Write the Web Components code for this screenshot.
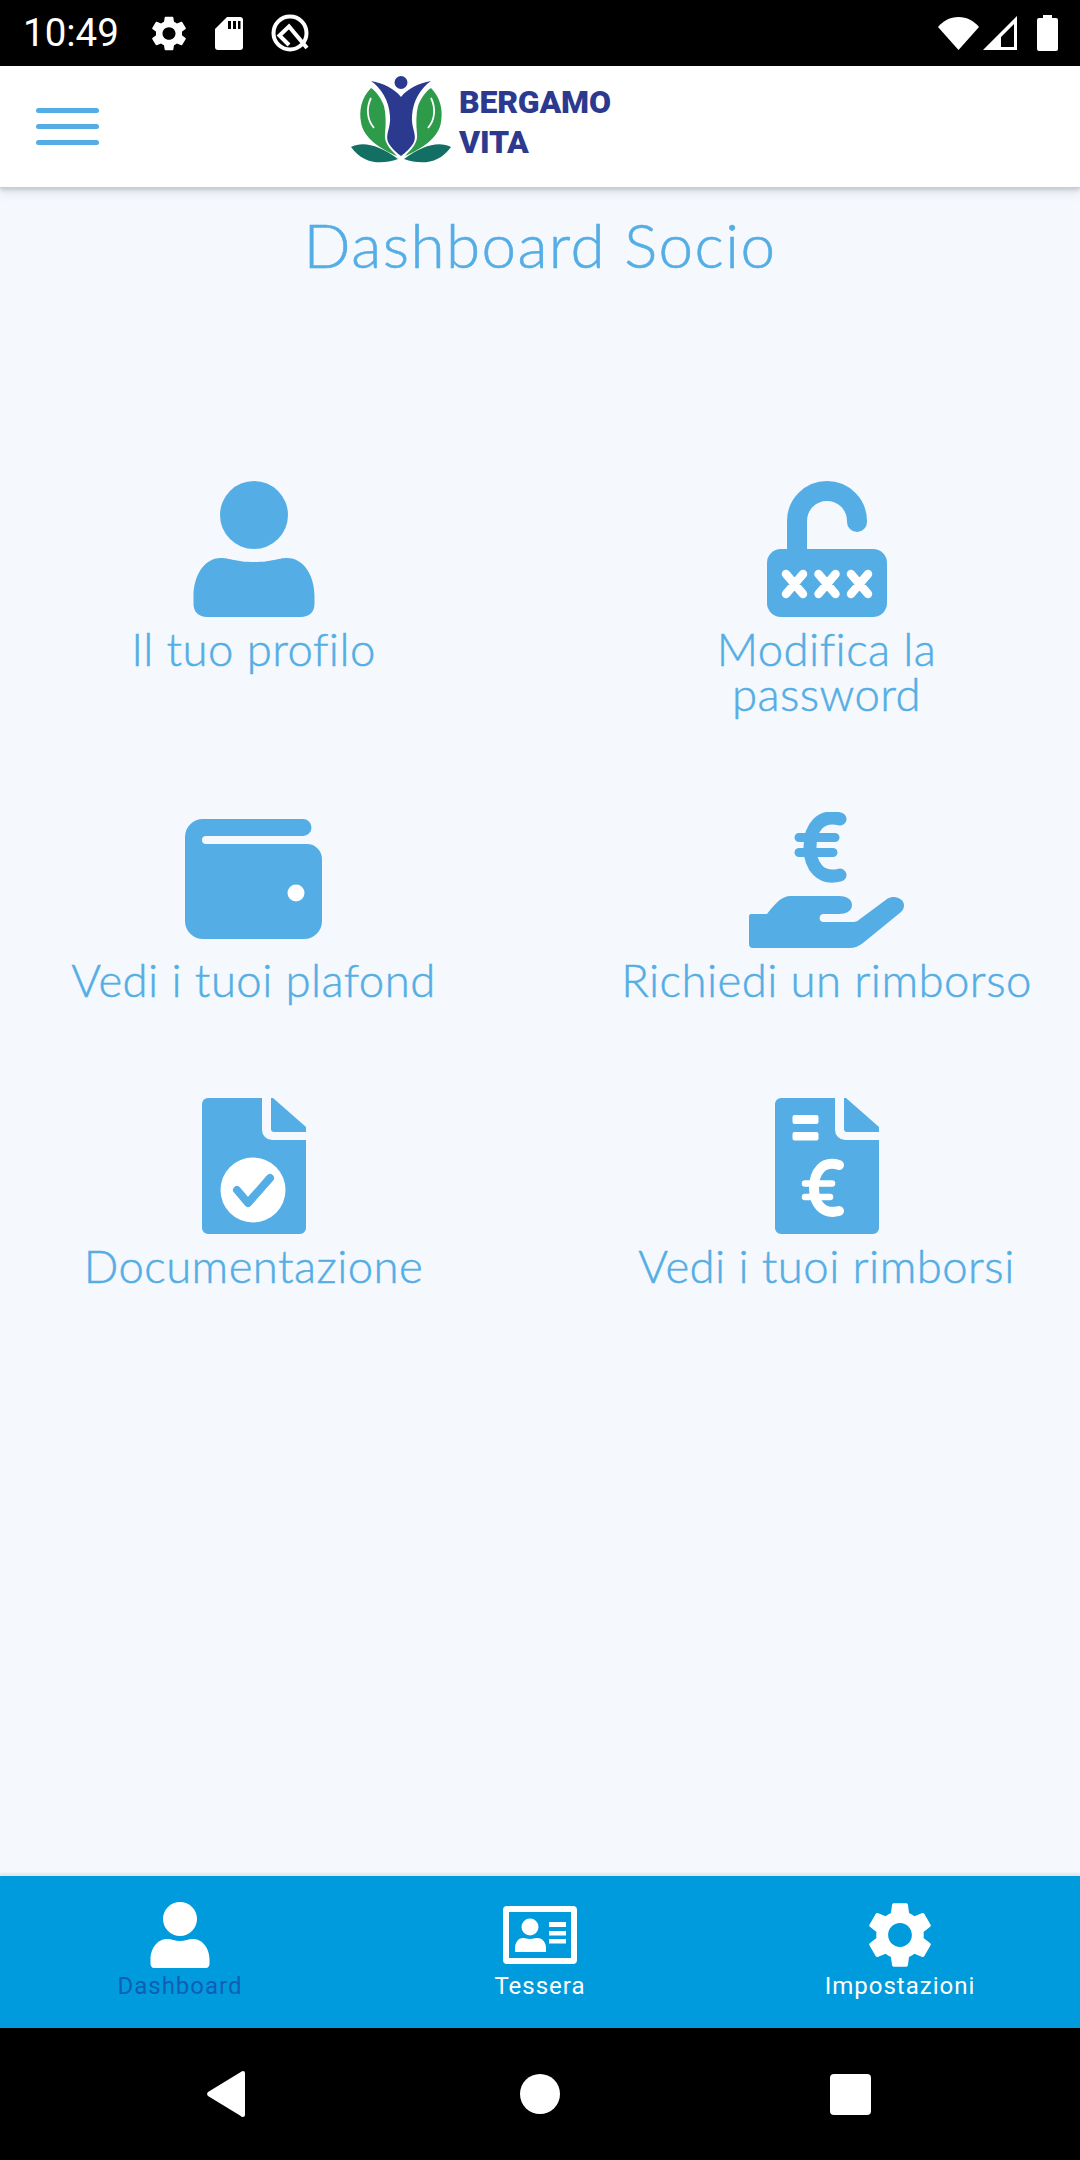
<!DOCTYPE html>
<html lang="it">
<head>
<meta charset="utf-8">
<title>Dashboard Socio</title>
<style>
  html, body { margin: 0; padding: 0; background: #f5f8fc; }
</style>
</head>
<body>
<member-dashboard>
  <status-bar slot="status"></status-bar>
  <app-header slot="header"></app-header>

  <dash-tile label="Il tuo profilo">
    <svg width="140" height="136" viewBox="0 0 140 136" fill="#54aee5">
      <ellipse cx="70" cy="34" rx="34" ry="34"/>
      <path d="M37 77C46 77 52 81 70 81C88 81 94 77 103 77C120 77 130.500 95 130.500 115V123C130.500 131 125 136 117 136H23C15 136 9.500 131 9.500 123V115C9.500 95 20 77 37 77Z"/>
    </svg>
  </dash-tile>
  <dash-tile label="Modifica la<br>password">
    <svg width="120" height="136" viewBox="0 0 120 136" fill="#54aee5">
      <path d="M30 75V40A30 30 0 0 1 90 40V41" fill="none" stroke="#54aee5" stroke-width="20" stroke-linecap="round"/>
      <rect x="0" y="68" width="120" height="68" rx="14"/>
      <path d="M19 93L36 113M36 93L19 113M51.500 93L68.500 113M68.500 93L51.500 113M84 93L101 113M101 93L84 113" stroke="#fff" stroke-width="8.500" stroke-linecap="round"/>
    </svg>
  </dash-tile>
  <dash-tile label="Vedi i tuoi plafond">
    <svg width="137" height="136" viewBox="0 -7 137 136" fill="#54aee5">
      <path d="M18 0H118A8.500 8.500 0 0 1 118 17H21A4 4 0 0 0 21 25H122A15 15 0 0 1 137 40V102A18 18 0 0 1 119 120H18A18 18 0 0 1 0 102V18A18 18 0 0 1 18 0Z"/>
      <ellipse cx="111" cy="74" rx="8.500" ry="8.500" fill="#fff"/>
    </svg>
  </dash-tile>
  <dash-tile label="Richiedi un rimborso">
    <svg width="155" height="136" viewBox="0 0 155 136" fill="#54aee5">
      <path d="M91 7C72 2 61 15 61 35C61 55 72 68 91 63" fill="none" stroke="#54aee5" stroke-width="13" stroke-linecap="round"/>
      <path d="M50 25.500H86M50 40.500H84" stroke="#54aee5" stroke-width="9" stroke-linecap="round"/>
      <path d="M2 102H18C26 92 32 84 42 84H90C97 84 103 87 103 93C103 99 97 102 90 102H74C70 102 69 110 74 110H104C107 110 109 109 111 107L138 87C146 82 155 87 155 93C155 96 154 98 152 100L114 131C110 134 106 136 100 136H4C1 136 0 134 0 132V104C0 103 1 102 2 102Z"/>
    </svg>
  </dash-tile>
  <dash-tile label="Documentazione">
    <svg width="104" height="136" viewBox="0 0 104 136" fill="#54aee5">
      <path d="M6 0H60V32A10 10 0 0 0 70 42H104V130A6 6 0 0 1 98 136H6A6 6 0 0 1 0 130V6A6 6 0 0 1 6 0Z"/>
      <path d="M69 0H71L104 29V34H72A3 3 0 0 1 69 31Z"/>
      <circle cx="51" cy="92" r="32.500" fill="#fff"/>
      <path d="M35 92L46 105L68 80" fill="none" stroke="#54aee5" stroke-width="8" stroke-linecap="round" stroke-linejoin="round"/>
    </svg>
  </dash-tile>
  <dash-tile label="Vedi i tuoi rimborsi">
    <svg width="104" height="136" viewBox="0 0 104 136" fill="#54aee5">
      <path d="M6 0H60V32A10 10 0 0 0 70 42H104V130A6 6 0 0 1 98 136H6A6 6 0 0 1 0 130V6A6 6 0 0 1 6 0Z"/>
      <path d="M69 0H71L104 29V34H72A3 3 0 0 1 69 31Z"/>
      <rect x="17.500" y="17" width="26" height="9" rx="2" fill="#fff"/>
      <rect x="17.500" y="34" width="26" height="8.500" rx="2" fill="#fff"/>
      <path d="M64 67C48 62 39 74 39 90C39 106 48 117 64 113" fill="none" stroke="#fff" stroke-width="10" stroke-linecap="round"/>
      <path d="M30 85.500H57M30 99H55" stroke="#fff" stroke-width="6.500" stroke-linecap="round"/>
    </svg>
  </dash-tile>

  <bottom-nav slot="nav">
    <nav-item label="Dashboard" active>
      <svg width="60" height="66" viewBox="0 0 60 66" fill="#fff">
        <ellipse cx="30" cy="17" rx="17" ry="17"/>
        <path d="M17 37C22 37 25 39 30 39C35 39 38 37 43 37C53 37 59.500 47 59.500 57V62C59.500 64 58 66 56 66H4C2 66 .5 64 .5 62V57C.5 47 7 37 17 37Z"/>
      </svg>
    </nav-item>
    <nav-item label="Tessera">
      <svg width="74" height="66" viewBox="0 -4 74 66" fill="#fff">
        <path fill-rule="evenodd" d="M4 0H70A4 4 0 0 1 74 4V54A4 4 0 0 1 70 58H4A4 4 0 0 1 0 54V4A4 4 0 0 1 4 0ZM6 6V52H68V6Z"/>
        <ellipse cx="27" cy="21" rx="8.500" ry="8.500"/>
        <path d="M20 32C23 32 24 33 27 33C30 33 31 32 34 32C40 32 43 37 43 42V46H12V42C12 37 15 32 20 32Z"/>
        <rect x="46" y="16" width="17" height="5"/>
        <rect x="46" y="25" width="17" height="4.500"/>
        <rect x="46" y="33" width="17" height="4.500"/>
      </svg>
    </nav-item>
    <nav-item label="Impostazioni">
      <svg width="62" height="66" viewBox="2.600 2 18.800 20" preserveAspectRatio="none" fill="#fff">
        <path d="M19.140 12.940c.04-.3.06-.61.06-.94 0-.32-.02-.64-.07-.94l2.030-1.580c.18-.14.23-.41.12-.61l-1.920-3.320c-.12-.22-.37-.29-.59-.22l-2.390.96c-.5-.38-1.030-.7-1.620-.94l-.36-2.540c-.04-.24-.24-.41-.48-.41h-3.840c-.24 0-.43.17-.47.41l-.36 2.540c-.59.24-1.130.57-1.620.94l-2.390-.96c-.22-.08-.47 0-.59.22L2.740 8.870c-.12.21-.08.47.12.61l2.030 1.580c-.05.3-.09.63-.09.94s.02.64.07.94l-2.030 1.580c-.18.14-.23.41-.12.61l1.920 3.320c.12.22.37.29.59.22l2.390-.96c.5.38 1.030.7 1.620.94l.36 2.540c.05.24.24.41.48.41h3.840c.24 0 .44-.17.47-.41l.36-2.540c.59-.24 1.130-.56 1.620-.94l2.390.96c.22.08.47 0 .59-.22l1.920-3.320c.12-.22.07-.47-.12-.61l-2.010-1.580zM12 15.600c-1.980 0-3.600-1.620-3.600-3.600s1.620-3.600 3.600-3.600 3.600 1.620 3.600 3.600-1.620 3.600-3.600 3.600z"/>
      </svg>
    </nav-item>
  </bottom-nav>
  <system-nav slot="system"></system-nav>
</member-dashboard>

<script>
class MemberDashboard extends HTMLElement {
  constructor() {
    super();
    this.attachShadow({ mode: 'open' });
    this.shadowRoot.innerHTML = `
      <style>
        :host { display: flex; flex-direction: column; width: 1080px; height: 2160px; background: #f5f8fc; overflow: hidden; }
        main { flex: 1; display: flex; flex-direction: column; align-items: center; }
        h1 {
          margin: 21px 0 0;
          font: 300 62px/72px Lato, "Liberation Sans", sans-serif;
          letter-spacing: 1.4px;
          -webkit-text-stroke: .6px #54aee5;
          color: #54aee5;
        }
        .grid {
          margin-top: 201px;
          display: grid;
          grid-template-columns: 507px 507px;
          column-gap: 66px;
          row-gap: 96px;
        }
      </style>
      <slot name="status"></slot>
      <slot name="header"></slot>
      <main>
        <h1>Dashboard Socio</h1>
        <div class="grid"><slot></slot></div>
      </main>
      <slot name="nav"></slot>
      <slot name="system"></slot>
    `;
  }
}
customElements.define('member-dashboard', MemberDashboard);

class StatusBar extends HTMLElement {
  constructor() {
    super();
    this.attachShadow({ mode: 'open' });
    this.shadowRoot.innerHTML = `
      <style>
        :host { display: flex; align-items: center; height: 66px; background: #000; color: #fff; padding: 0 22px 0 23px; box-sizing: border-box; }
        .time { font: 400 38.500px/66px Roboto, sans-serif; width: 129px; }
        svg { display: block; flex: none; }
        .left { display: flex; align-items: center; flex: 1; }
        .right { display: flex; align-items: center; }
      </style>
      <div class="left">
        <span class="time">10:49</span>
        <svg width="34" height="35" viewBox="2.600 2 18.800 20" preserveAspectRatio="none" fill="#fff"><path fill-rule="evenodd" d="M19.140 12.940c.04-.3.06-.61.06-.94 0-.32-.02-.64-.07-.94l2.030-1.580c.18-.14.23-.41.12-.61l-1.920-3.320c-.12-.22-.37-.29-.59-.22l-2.390.96c-.5-.38-1.030-.7-1.620-.94l-.36-2.540c-.04-.24-.24-.41-.48-.41h-3.840c-.24 0-.43.17-.47.41l-.36 2.540c-.59.24-1.130.57-1.620.94l-2.390-.96c-.22-.08-.47 0-.59.22L2.740 8.870c-.12.21-.08.47.12.61l2.030 1.580c-.05.3-.09.63-.09.94s.02.64.07.94l-2.030 1.580c-.18.14-.23.41-.12.61l1.920 3.320c.12.22.37.29.59.22l2.390-.96c.5.38 1.030.7 1.620.94l.36 2.540c.05.24.24.41.48.41h3.840c.24 0 .44-.17.47-.41l.36-2.540c.59-.24 1.130-.56 1.620-.94l2.390.96c.22.08.47 0 .59-.22l1.920-3.320c.12-.22.07-.47-.12-.61l-2.010-1.580zM12 15.600c-1.980 0-3.600-1.620-3.600-3.600s1.620-3.600 3.600-3.600 3.600 1.620 3.600 3.600-1.620 3.600-3.600 3.600z"/></svg>
        <svg style="margin-left:29px" width="28" height="33" viewBox="0 0 28 33"><path fill="#fff" d="M12 0H25A3 3 0 0 1 28 3V30A3 3 0 0 1 25 33H3A3 3 0 0 1 0 30V12Z"/><path fill="#000" d="M13 4h3v8h-3zM18 4h3v8h-3zM23 4h2.500v8H23z"/></svg>
        <svg style="margin-left:28px" width="38" height="38" viewBox="0 0 38 38" fill="none" stroke="#fff" stroke-width="4"><circle cx="19" cy="19" r="16.500"/><path d="M18 31L8.500 21.500L18 12.500L36 34"/></svg>
      </div>
      <div class="right">
        <svg width="41" height="33" viewBox="0 0 41 33"><path fill="#fff" d="M20.500 33L0 10C5 4 12 0 20.500 0S36 4 41 10Z"/></svg>
        <svg style="margin-left:4px" width="34" height="34" viewBox="0 0 34 34"><path fill="#fff" fill-rule="evenodd" d="M34 0V34H0ZM31 8L18 21V31H31Z"/></svg>
        <svg style="margin-left:20px" width="21" height="36" viewBox="0 0 21 36"><path fill="#fff" d="M6 0H15V3H19A2 2 0 0 1 21 5V34A2 2 0 0 1 19 36H2A2 2 0 0 1 0 34V5A2 2 0 0 1 2 3H6Z"/></svg>
      </div>
    `;
  }
}
customElements.define('status-bar', StatusBar);

class AppHeader extends HTMLElement {
  constructor() {
    super();
    this.attachShadow({ mode: 'open' });
    this.shadowRoot.innerHTML = `
      <style>
        :host { display: flex; align-items: center; height: 121px; background: #fff; position: relative; padding-left: 36px; box-sizing: border-box; z-index: 1; box-shadow: 0 1px 0 #c9ced3, 0 3px 4px rgba(120,130,140,.35), 0 8px 8px rgba(150,160,170,.12); }
        .burger { display: flex; flex-direction: column; gap: 11px; width: 63px; }
        .burger i { display: block; height: 5px; background: #54aee5; border-radius: 3px; }
        .brand { display: flex; align-items: flex-start; align-self: flex-start; margin: 10px 0 0 252px; }
        svg { display: block; }
        .name { margin: 6px 0 0 8px; font: 900 32px/40px Roboto, sans-serif; letter-spacing: -.2px; color: #2b3a8f; }
      </style>
      <div class="burger"><i></i><i></i><i></i></div>
      <div class="brand">
        <svg width="100" height="88" viewBox="0 0 100 88">
          <path fill="#2e9b4a" d="M20 12C10 22 8 35 10 46C12 62 30 73 46 80C38 72 33 66 34 58C35 48 35 38 33 30C30 22 25 15 20 12Z"/>
          <path fill="#2e9b4a" d="M80 12C90 22 92 35 90 46C88 62 70 73 54 80C62 72 67 66 66 58C65 48 65 38 67 30C70 22 75 15 80 12Z"/>
          <path fill="none" stroke="#fff" stroke-width="1.800" d="M20 22C15 32 16 44 23 52M80 22C85 32 84 44 77 52"/>
          <path fill="#2b3a8f" stroke="#fff" stroke-width="1.500" paint-order="stroke" d="M20 5C32 7 44 13 50 21C56 13 68 7 80 5C70 12 62 24 61 40C60 52 66 58 63 66C60 72 54 77 50 80C46 77 40 72 37 66C34 58 40 52 39 40C38 24 30 12 20 5Z"/>
          <circle cx="50" cy="6.500" r="6.500" fill="#2b3a8f"/>
          <path fill="#136f63" d="M0 71C12 65 28 69 47 83C30 89 12 88 0 71Z"/>
          <path fill="#136f63" d="M100 71C88 65 72 69 53 83C70 89 88 88 100 71Z"/>
        </svg>
        <div class="name">BERGAMO<br>VITA</div>
      </div>
    `;
  }
}
customElements.define('app-header', AppHeader);

class DashTile extends HTMLElement {
  constructor() {
    super();
    this.Label = this.getAttribute("label");
    this.attachShadow({ mode: 'open' });
    this.shadowRoot.innerHTML = `
      <style>
        :host { display: flex; flex-direction: column; align-items: center; }
        .icon { height: 136px; display: flex; align-items: flex-start; justify-content: center; }
        .label {
          margin-top: 9px;
          font: 300 45.500px/45px Lato, "Liberation Sans", sans-serif;
          letter-spacing: .45px;
          -webkit-text-stroke: .5px #54aee5;
          color: #54aee5;
          text-align: center;
          white-space: nowrap;
        }
      </style>
      <div class="icon"><slot></slot></div>
      <div class="label">${this.Label}</div>
    `;
  }
}
customElements.define('dash-tile', DashTile);

class BottomNav extends HTMLElement {
  constructor() {
    super();
    this.attachShadow({ mode: 'open' });
    this.shadowRoot.innerHTML = `
      <style>
        :host { display: grid; grid-template-columns: 360px 360px 360px; height: 152px; background: #009bdc; box-shadow: 0 -3px 2px rgba(150,160,170,.18); position: relative; }
      </style>
      <slot></slot>
    `;
  }
}
customElements.define('bottom-nav', BottomNav);

class NavItem extends HTMLElement {
  constructor() {
    super();
    this.Label = this.getAttribute("label");
    this.attachShadow({ mode: 'open' });
    this.shadowRoot.innerHTML = `
      <style>
        :host { display: flex; flex-direction: column; align-items: center; padding-top: 26px; color: #fff; }
        :host([active]) { color: #0e5fb4; }
        .icon { height: 66px; }
        .text { margin-top: 3px; font: 400 24px/30px Roboto, sans-serif; letter-spacing: 1px; }
      </style>
      <div class="icon"><slot></slot></div>
      <div class="text">${this.Label}</div>
    `;
  }
}
customElements.define('nav-item', NavItem);

class SystemNav extends HTMLElement {
  constructor() {
    super();
    this.attachShadow({ mode: 'open' });
    this.shadowRoot.innerHTML = `
      <style>
        :host { display: flex; height: 132px; background: #000; align-items: center; padding-left: 207px; box-sizing: border-box; }
        svg { display: block; flex: none; }
      </style>
      <svg width="38" height="46" viewBox="0 0 38 46"><path fill="#fff" d="M36 0A2 2 0 0 1 38 2V44A2 2 0 0 1 36 46C35 46 34 45.500 33 44.500L1 25A3 3 0 0 1 1 21L33 1.500C34 .5 35 0 36 0Z"/></svg>
      <svg style="margin-left:275px" width="40" height="40" viewBox="0 0 40 40"><circle cx="20" cy="20" r="20" fill="#fff"/></svg>
      <svg style="margin-left:270px" width="41" height="41" viewBox="0 0 41 41"><rect width="41" height="41" rx="4" fill="#fff"/></svg>
    `;
  }
}
customElements.define('system-nav', SystemNav);
</script>
</body>
</html>
